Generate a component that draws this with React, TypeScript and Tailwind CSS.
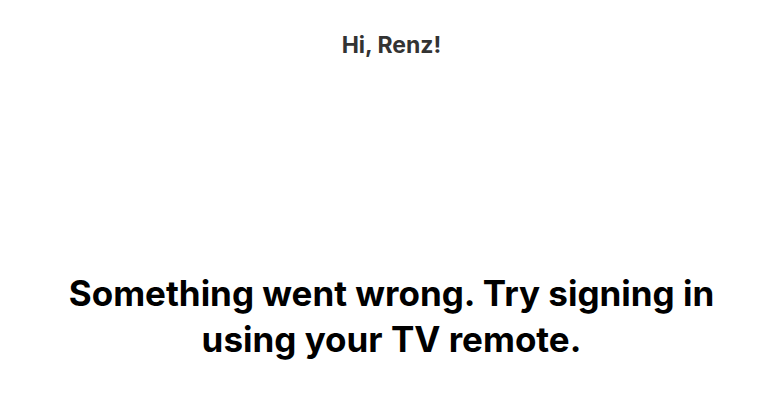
export default function App() {
  return (
    <div className="flex h-[410px] w-full flex-col items-center bg-white font-['Inter',sans-serif]">
      <p className="mt-[30px] text-[23px] font-bold leading-[30px] text-[#333]">Hi, Renz!</p>
      <h1 className="mt-[210px] max-w-[700px] text-center text-[35px] font-bold leading-[46px] text-black">
        Something went wrong. Try signing in using your TV remote.
      </h1>
    </div>
  );
}
